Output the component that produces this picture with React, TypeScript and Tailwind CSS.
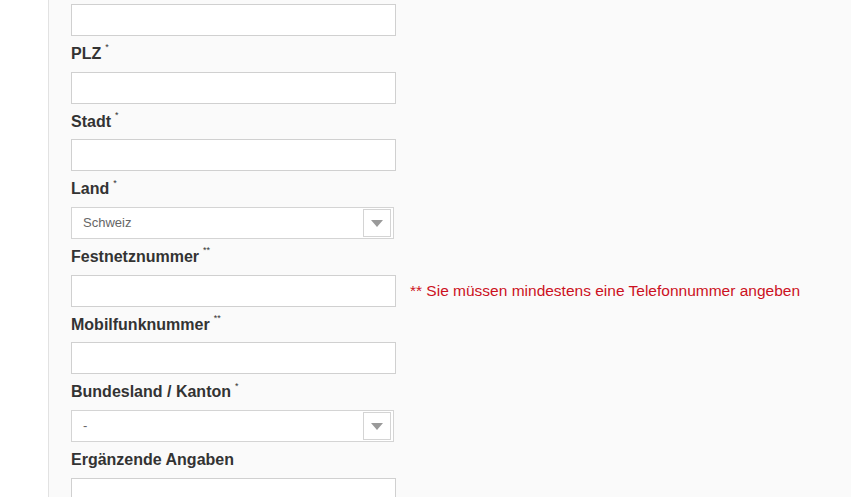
import { ReactNode } from 'react'

const font = { fontFamily: '"Liberation Sans", Arial, sans-serif' }

function Label({ text, stars }: { text: string; stars?: string }) {
  return (
    <div className="h-[35.7px] flex items-center text-[16px] font-bold text-[#333]">
      <span>{text}</span>
      {stars && (
        <span className="ml-[4px] -mt-[12px] text-[9px] font-normal leading-none">
          {stars}
        </span>
      )}
    </div>
  )
}

function TextInput() {
  return (
    <div className="w-[325px] h-[32px] border border-[#d0d0d0] bg-white" />
  )
}

function SelectBox({ value }: { value: string }) {
  return (
    <div className="w-[323px] h-[32px] border border-[#d4d4d4] bg-white flex items-center justify-between">
      <span className="pl-[11px] text-[13px] text-[#666]">{value}</span>
      <div className="mr-[2px] w-[28px] h-[28px] border border-[#d4d4d4] bg-white flex items-center justify-center">
        <svg width="12" height="7" viewBox="0 0 12 7">
          <path d="M0 0 L12 0 L6 7 Z" fill="#9a9a9a" />
        </svg>
      </div>
    </div>
  )
}

function Field({ children }: { children: ReactNode }) {
  return <div>{children}</div>
}

export default function App() {
  return (
    <div className="flex min-h-[497px] bg-white" style={font}>
      <div className="w-[48px] shrink-0 bg-white" />
      <div className="flex-1 border-l border-[#e2e2e2] bg-[#fafafa] pl-[22px] pt-[4px]">
        <Field>
          <TextInput />
        </Field>
        <Label text="PLZ" stars="*" />
        <TextInput />
        <Label text="Stadt" stars="*" />
        <TextInput />
        <Label text="Land" stars="*" />
        <SelectBox value="Schweiz" />
        <Label text="Festnetznummer" stars="**" />
        <div className="flex items-center gap-[14px]">
          <TextInput />
          <span className="text-[15.5px] text-[#cc1122]">
            ** Sie müssen mindestens eine Telefonnummer angeben
          </span>
        </div>
        <Label text="Mobilfunknummer" stars="**" />
        <TextInput />
        <Label text="Bundesland / Kanton" stars="*" />
        <SelectBox value="-" />
        <Label text="Ergänzende Angaben" />
        <TextInput />
      </div>
    </div>
  )
}
